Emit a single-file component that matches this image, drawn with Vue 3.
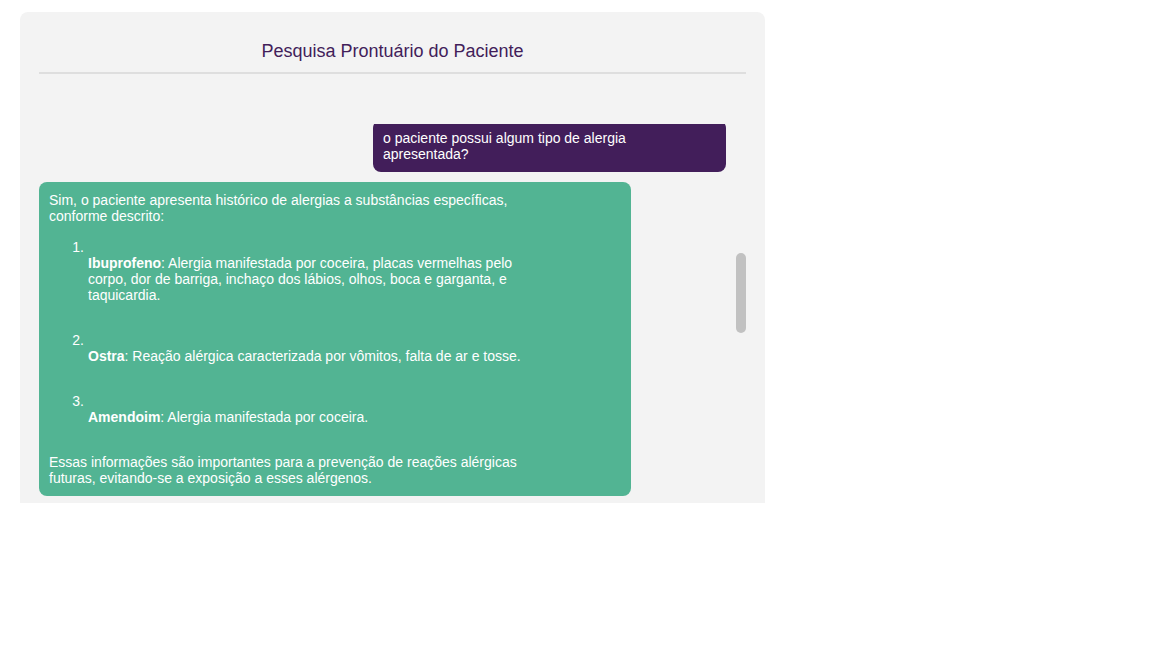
<script setup>
const allergies = [
  {
    name: 'Ibuprofeno',
    detail:
      'Alergia manifestada por coceira, placas vermelhas pelo corpo, dor de barriga, inchaço dos lábios, olhos, boca e garganta, e taquicardia.',
  },
  { name: 'Ostra', detail: 'Reação alérgica caracterizada por vômitos, falta de ar e tosse.' },
  { name: 'Amendoim', detail: 'Alergia manifestada por coceira.' },
]
</script>

<template>
  <main class="panel">
    <h1 class="title">Pesquisa Prontuário do Paciente</h1>
    <section class="chat" aria-label="Conversa">
      <div class="messages">
        <div class="bubble user">
          <div class="text">o paciente possui algum tipo de alergia apresentada?</div>
        </div>
        <div class="bubble reply">
          <div class="text">
            <p>Sim, o paciente apresenta histórico de alergias a substâncias específicas, conforme descrito:</p>
            <ol>
              <li v-for="item in allergies" :key="item.name">
                <p><strong>{{ item.name }}</strong>: {{ item.detail }}</p>
              </li>
            </ol>
            <p>Essas informações são importantes para a prevenção de reações alérgicas futuras, evitando-se a exposição a esses alérgenos.</p>
          </div>
        </div>
      </div>
      <div class="scrollbar"><div class="thumb"></div></div>
    </section>
  </main>
</template>

<style>
body {
  background: #fff;
}
</style>

<style scoped>
.panel {
  box-sizing: border-box;
  max-width: 745px;
  margin: 12px 20px 0;
  padding: 0 19px 7px;
  background: #f3f3f3;
  border-radius: 8px 8px 0 0;
  font-family: "Liberation Sans", Arial, sans-serif;
}
.title {
  margin: 0;
  padding: 28px 0 10px;
  border-bottom: 2px solid #dedede;
  color: #421e5a;
  font-size: 18px;
  font-weight: 400;
  line-height: 22px;
  text-align: center;
}
.chat {
  display: flex;
  margin-top: 50px;
  overflow: hidden;
}
.messages {
  flex: 1;
  display: flex;
  flex-direction: column;
  gap: 10px;
  margin-top: -4px;
}
.bubble {
  box-sizing: border-box;
  padding: 10px;
  border-radius: 8px;
  color: #fff;
  font-size: 14px;
  line-height: 16px;
}
.user {
  align-self: flex-end;
  width: 353px;
  max-width: 90%;
  margin-right: 10px;
  background: #421e5a;
}
.reply {
  width: 85%;
  background: #52b493;
}
.text {
  max-width: 83%;
}
.user .text {
  max-width: 80%;
}
p {
  margin: 0;
}
ol {
  display: flex;
  flex-direction: column;
  gap: 29px;
  margin: 15px 0 29px;
  padding-left: 39px;
  list-style: none;
  counter-reset: item;
}
li {
  counter-increment: item;
}
li::before {
  content: counter(item) ".";
  display: block;
  width: 35px;
  margin-left: -39px;
  text-align: right;
}
.scrollbar {
  width: 10px;
  padding-top: 129px;
}
.thumb {
  height: 80px;
  border-radius: 5px;
  background: #c1c1c1;
}
</style>
